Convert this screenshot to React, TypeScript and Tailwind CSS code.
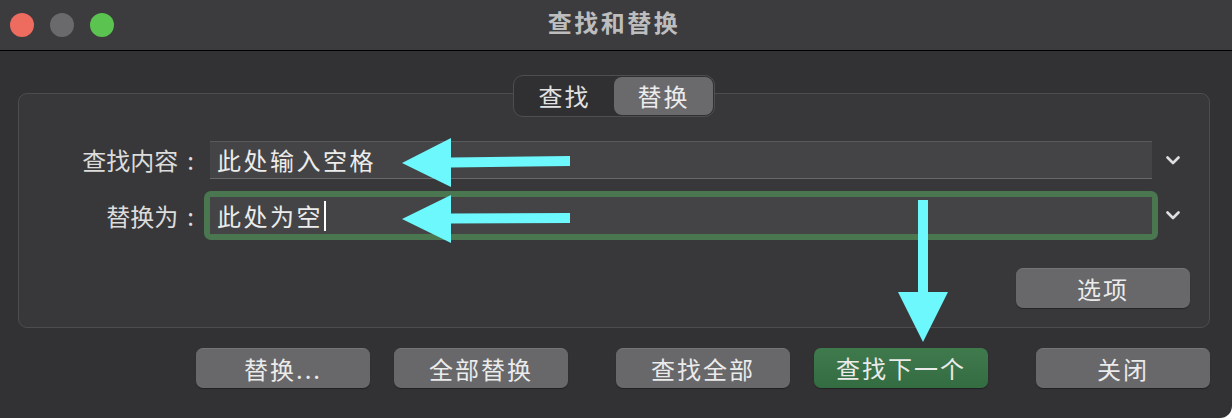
import React from "react";

const Chevron = () => (
  <svg width="14" height="9" viewBox="0 0 14 9" className="shrink-0">
    <path d="M1.5 1.5 L7 7 L12.5 1.5" fill="none" stroke="#dedede" strokeWidth="2.6" strokeLinecap="round" strokeLinejoin="round" />
  </svg>
);

const Button = ({ label, green, className }: { label: string; green?: boolean; className?: string }) => (
  <button
    type="button"
    className={
      "w-[174px] h-[40px] rounded-[7px] flex items-center justify-center text-[24px] leading-none tracking-[2px] text-[#ebebeb] shadow-[0_1px_1px_rgba(0,0,0,0.35)] " +
      (green
        ? "bg-gradient-to-b from-[#3f7a4d] to-[#346c42] "
        : "bg-[#686769] border-t border-[#757476] ") +
      (className ?? "")
    }
  >
    {label}
  </button>
);

export default function App() {
  return (
    <div className="relative w-[1232px] h-[418px] overflow-hidden bg-[#323234] rounded-br-[12px] font-['Noto_Sans_CJK_SC','Noto_Sans',sans-serif]">
      {/* title bar */}
      <div className="h-[51px] grid grid-cols-[1fr_auto_1fr] items-center bg-[#3c3b3e] border-b border-black">
        <div className="flex gap-4 pl-[10px]">
          <span className="w-6 h-6 rounded-full bg-[#ee6b5f]" />
          <span className="w-6 h-6 rounded-full bg-[#6a696c]" />
          <span className="w-6 h-6 rounded-full bg-[#5bc34f]" />
        </div>
        <div className="text-[24px] font-bold leading-none tracking-[2.5px] text-[#bdbdbd] -mt-[6px] -ml-[4px]">查找和替换</div>
        <div />
      </div>

      {/* body */}
      <div className="pl-[18px] pr-[22px] pt-[42px]">
        <div className="relative h-[235px] rounded-[9px] border border-[#4d4d4f] bg-[#38383a] pt-[47px]">
          {/* segmented control */}
          <div className="absolute left-1/2 -translate-x-1/2 -top-[19px] w-[202px] h-[42px] rounded-[10px] border border-[#4e4e50] bg-[#303032] flex p-px">
            <div className="flex-1 flex items-center justify-center text-[24px] leading-none tracking-[2px] text-[#e2e2e2]">查找</div>
            <div className="flex-1 flex items-center justify-center rounded-[8px] bg-[#6a696c] text-[24px] leading-none tracking-[2px] text-[#ececec]">替换</div>
          </div>

          {/* find row */}
          <div className="flex items-center h-[38px]">
            <div className="w-[175px] text-right text-[24px] leading-none text-[#dcdcdc]">
              查找内容<span className="ml-[9px]">:</span>
            </div>
            <div className="ml-[16px] w-[942px] h-[38px] flex items-center px-[7px] bg-[#444446] border-t border-[#5a5a5c] border-b border-b-[#68686a]">
              <span className="text-[24px] leading-none tracking-[2.5px] text-[#ececec]">此处输入空格</span>
            </div>
            <div className="ml-[14px]">
              <Chevron />
            </div>
          </div>

          {/* replace row */}
          <div className="mt-[12px] flex items-center">
            <div className="w-[175px] text-right text-[24px] leading-none text-[#dcdcdc]">
              替换为<span className="ml-[9px]">:</span>
            </div>
            <div className="ml-[10px] w-[954px] p-[6px] rounded-[7px] bg-[#4a7650]">
              <div className="h-[37px] flex items-center px-[7px] bg-[#444446]">
                <span className="text-[24px] leading-none tracking-[2.5px] text-[#ececec]">此处为空</span>
                <span className="ml-[1px] w-[2px] h-[30px] bg-white" />
              </div>
            </div>
            <div className="ml-[8px]">
              <Chevron />
            </div>
          </div>

          <div className="mt-[28px] flex justify-end pr-[19px]">
            <Button label="选项" className="h-[39px]" />
          </div>
        </div>

        {/* bottom buttons */}
        <div className="mt-[20px] flex pl-[178px]">
          <Button label="替换..." />
          <Button label="全部替换" className="ml-[24px]" />
          <Button label="查找全部" className="ml-[48px]" />
          <Button label="查找下一个" green className="ml-[24px]" />
          <Button label="关闭" className="ml-[48px]" />
        </div>
      </div>

      {/* annotation arrows */}
      <svg className="absolute inset-0 pointer-events-none" width="1232" height="418" viewBox="0 0 1232 418">
        <polygon fill="#6cf8fd" points="402,163 451,138 451,157.5 570,156 570,166 451,167.5 451,187" />
        <polygon fill="#6cf8fd" points="402,219 451,195 451,213.5 570,213 570,223 451,223.5 451,243" />
        <polygon fill="#6cf8fd" points="918,200 928,200 928,292 948,292 923,342 898,292 918,292" />
      </svg>
    </div>
  );
}
